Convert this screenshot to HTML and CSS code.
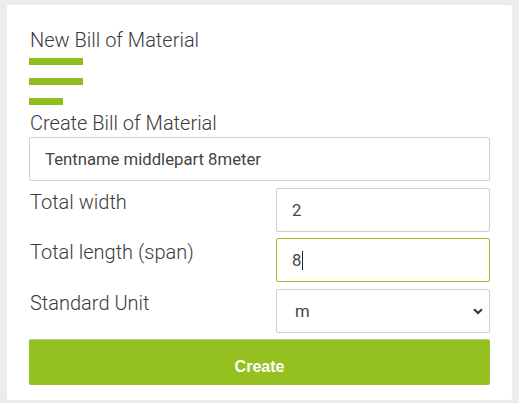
FILE: index.html
```html
<!DOCTYPE html>
<html>
<head>
<meta charset="utf-8">
<link rel="stylesheet" href="styles.css">
</head>
<body>
<div class="card">
  <h1 class="title">New Bill of Material</h1>
  <div class="bars">
    <span class="bar"></span>
    <span class="bar"></span>
    <span class="bar short"></span>
  </div>
  <h2 class="subtitle">Create Bill of Material</h2>
  <form class="form">
    <input class="field full" type="text" value="Tentname middlepart 8meter">
    <div class="row">
      <label class="label">Total width</label>
      <input class="field" type="text" value="2">
    </div>
    <div class="row tight">
      <label class="label">Total length (span)</label>
      <div class="field focused">8<span class="caret"></span></div>
    </div>
    <div class="row">
      <label class="label">Standard Unit</label>
      <div class="select-wrap">
        <select class="field select">
          <option>m</option>
        </select>
        <svg class="chevron" width="10" height="7" viewBox="0 0 10 7"><path d="M1 1.2 L5 5 L9 1.2" fill="none" stroke="#333" stroke-width="2"/></svg>
      </div>
    </div>
    <button class="btn" type="button">Create</button>
  </form>
</div>
</body>
</html>
```
FILE: styles.css
```css
html, body {
  margin: 0;
  padding: 0;
}
body {
  background: #ececec;
  padding: 5px 0 0 7px;
  height: 403px;
  box-sizing: border-box;
  overflow: hidden;
}
.card {
  width: 505px;
  height: 395px;
  background: #fff;
  box-sizing: border-box;
  padding: 23px 22px 0 22px;
  border-radius: 2px;
}
.title, .subtitle {
  margin: 0;
  font-family: Roboto, "Liberation Sans", sans-serif;
  font-weight: 300;
  font-size: 20px;
  line-height: 24px;
  color: #3a3a3a;
  padding-left: 1px;
}
.bars {
  display: flex;
  flex-direction: column;
  gap: 13px;
  margin-top: 6px;
}
.bar {
  display: block;
  width: 54px;
  height: 7px;
  background: #8fbe1e;
}
.bar.short {
  width: 34px;
}
.subtitle {
  margin-top: 6px;
}
.form {
  margin-top: 2px;
  display: flex;
  flex-direction: column;
  gap: 7px;
}
.field {
  box-sizing: border-box;
  height: 44px;
  border: 1px solid #cfcfcf;
  border-radius: 2px;
  background: #fff;
  padding: 0 15px;
  font-family: Roboto, "Liberation Sans", sans-serif;
  font-size: 16.7px;
  color: #444;
  outline: none;
  margin: 0;
}
.full {
  width: 461px;
}
.row {
  display: flex;
  justify-content: space-between;
  align-items: flex-start;
}
.row.tight {
  margin-top: -1px;
}
.row .field, .select-wrap {
  width: 214px;
}
.label {
  font-family: Roboto, "Liberation Sans", sans-serif;
  font-weight: 300;
  font-size: 20px;
  line-height: 24px;
  color: #3a3a3a;
  padding: 2px 0 0 1px;
}
.focused {
  border-color: #93bf2a;
  display: flex;
  align-items: center;
}
.caret {
  display: inline-block;
  width: 1px;
  height: 19px;
  background: #222;
  margin-left: 1px;
}
.select-wrap {
  position: relative;
  height: 44px;
}
.select {
  width: 100%;
  appearance: none;
  -webkit-appearance: none;
  padding-left: 18px;
}
.chevron {
  position: absolute;
  right: 7px;
  top: 19px;
}
.btn {
  width: 461px;
  height: 45px;
  border: none;
  border-radius: 2px;
  background: #94c11f;
  color: #fff;
  font-family: "Liberation Sans", Arial, sans-serif;
  font-weight: bold;
  font-size: 16px;
  padding: 8px 0 0 0;
  box-shadow: 0 -1px 0 #b9c7a0;
}
```
